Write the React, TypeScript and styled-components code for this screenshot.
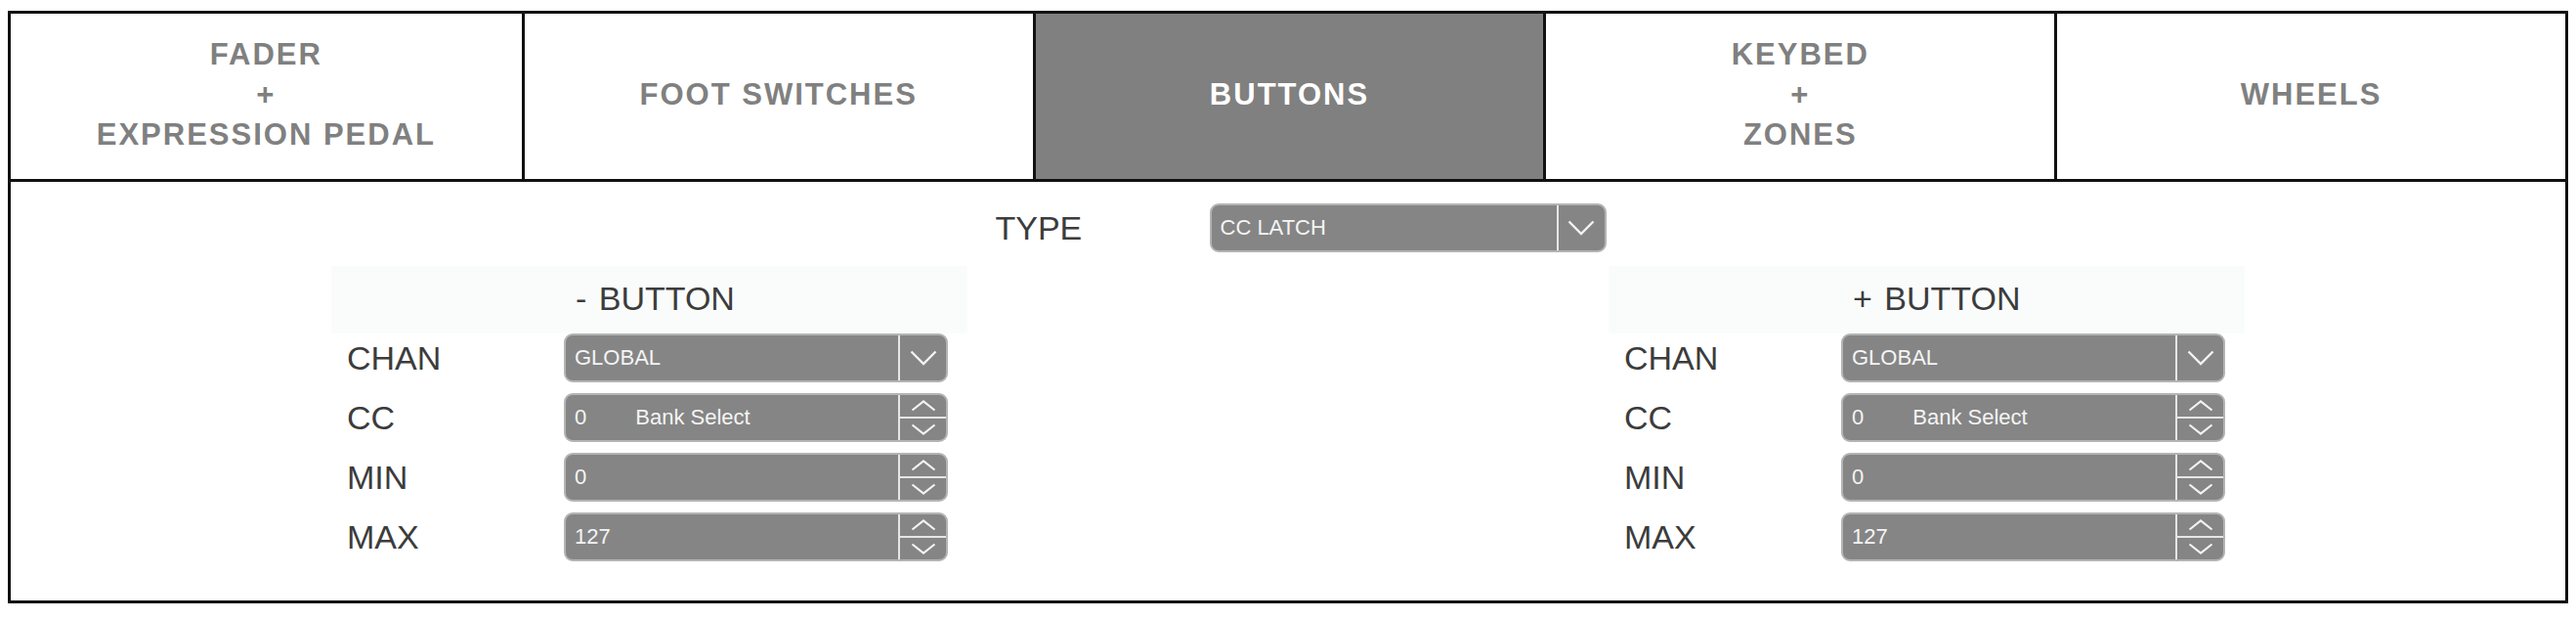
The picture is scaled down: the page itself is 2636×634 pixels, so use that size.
import React from "react";
import styled, { createGlobalStyle } from "styled-components";

const GlobalStyle = createGlobalStyle`
  html, body {
    margin: 0;
    padding: 0;
    background: #ffffff;
  }
  body {
    font-family: "Liberation Sans", Arial, sans-serif;
  }
`;

const Frame = styled.div`
  margin: 11px 8px 16px;
  border: 3px solid #111111;
  background: #ffffff;
`;

const TabBar = styled.div`
  display: grid;
  grid-template-columns: repeat(5, 1fr);
  height: 169px;
  border-bottom: 3px solid #111111;
`;

const Tab = styled.div<{ $active?: boolean }>`
  display: flex;
  align-items: center;
  justify-content: center;
  text-align: center;
  font-family: "Liberation Sans", Arial, sans-serif;
  font-weight: 700;
  font-size: 31px;
  letter-spacing: 2px;
  line-height: 41px;
  padding-bottom: 4px;
  color: ${(p) => (p.$active ? "#ffffff" : "#808080")};
  background: ${(p) => (p.$active ? "#808080" : "#ffffff")};

  & + & {
    border-left: 3px solid #111111;
  }
`;

const Content = styled.div`
  display: flex;
  flex-direction: column;
  padding: 22px 0 40px;
`;

const TypeRow = styled.div`
  display: grid;
  grid-template-columns: 219px 406px;
  align-items: center;
  width: 651px;
  box-sizing: border-box;
  padding-left: 26px;
  margin: 0 auto;
`;

const Sections = styled.div`
  display: flex;
  justify-content: space-around;
  margin-top: 14px;
`;

const Section = styled.div`
  display: flex;
  flex-direction: column;
  width: 651px;
`;

const SectionHeader = styled.div`
  display: grid;
  grid-template-columns: 238px 1fr;
  align-items: center;
  height: 69px;
  padding-bottom: 2px;
  box-sizing: border-box;
  background: #fafcfc;
  font-size: 34px;
  color: #3c3c3c;
`;

const HeaderText = styled.span`
  grid-column: 2;
  padding-left: 12px;
  word-spacing: 3px;
`;

const Rows = styled.div`
  display: grid;
  grid-template-columns: 222px 393px;
  grid-auto-rows: 50px;
  row-gap: 11px;
  padding-left: 16px;
`;

const Label = styled.div`
  display: flex;
  align-items: center;
  font-size: 34px;
  color: #3c3c3c;
`;

const Field = styled.div`
  display: flex;
  height: 50px;
  box-sizing: border-box;
  border: 2px solid #b4b4b4;
  border-radius: 9px;
  background: #858585;
  overflow: hidden;
`;

const FieldText = styled.div`
  flex: 1;
  display: flex;
  align-items: center;
  padding-left: 9px;
  font-size: 22px;
  color: #f4f4f4;
`;

const Gap = styled.span`
  display: inline-block;
  width: 50px;
`;

const Arrow = styled.div`
  width: 47px;
  display: flex;
  align-items: center;
  justify-content: center;
  border-left: 2px solid #e6e6e6;
`;

const Spinner = styled.div`
  width: 47px;
  display: flex;
  flex-direction: column;
  border-left: 2px solid #e6e6e6;
`;

const SpinHalf = styled.div`
  flex: 1;
  display: flex;
  align-items: center;
  justify-content: center;

  & + & {
    border-top: 2px solid #e6e6e6;
  }
`;

const ChevronDown = () => (
  <svg width="28" height="16" viewBox="0 0 28 16">
    <polyline points="1.5,1.5 14,14 26.5,1.5" fill="none" stroke="#f2f2f2" strokeWidth="2.4" />
  </svg>
);

const SmallChevron = ({ up }: { up?: boolean }) => (
  <svg width="26" height="12" viewBox="0 0 26 12">
    <polyline
      points={up ? "1.5,10.5 13,1.5 24.5,10.5" : "1.5,1.5 13,10.5 24.5,1.5"}
      fill="none"
      stroke="#f2f2f2"
      strokeWidth="2.2"
    />
  </svg>
);

const Select = ({ value }: { value: string }) => (
  <Field>
    <FieldText>{value}</FieldText>
    <Arrow>
      <ChevronDown />
    </Arrow>
  </Field>
);

const NumberBox = ({ children }: { children: React.ReactNode }) => (
  <Field>
    <FieldText>{children}</FieldText>
    <Spinner>
      <SpinHalf>
        <SmallChevron up />
      </SpinHalf>
      <SpinHalf>
        <SmallChevron />
      </SpinHalf>
    </Spinner>
  </Field>
);

const ButtonSection = ({ title }: { title: string }) => (
  <Section>
    <SectionHeader>
      <HeaderText>{title}</HeaderText>
    </SectionHeader>
    <Rows>
      <Label>CHAN</Label>
      <Select value="GLOBAL" />
      <Label>CC</Label>
      <NumberBox>
        0<Gap />Bank Select
      </NumberBox>
      <Label>MIN</Label>
      <NumberBox>0</NumberBox>
      <Label>MAX</Label>
      <NumberBox>127</NumberBox>
    </Rows>
  </Section>
);

const tabs = [
  { lines: ["FADER", "+", "EXPRESSION PEDAL"] },
  { lines: ["FOOT SWITCHES"] },
  { lines: ["BUTTONS"], active: true },
  { lines: ["KEYBED", "+", "ZONES"] },
  { lines: ["WHEELS"] },
];

export default function App() {
  return (
    <>
      <GlobalStyle />
      <Frame>
        <TabBar>
          {tabs.map((tab) => (
            <Tab key={tab.lines[0]} $active={tab.active}>
              <div>
                {tab.lines.map((line) => (
                  <div key={line}>{line}</div>
                ))}
              </div>
            </Tab>
          ))}
        </TabBar>
        <Content>
          <TypeRow>
            <Label>TYPE</Label>
            <Select value="CC LATCH" />
          </TypeRow>
          <Sections>
            <ButtonSection title="- BUTTON" />
            <ButtonSection title="+ BUTTON" />
          </Sections>
        </Content>
      </Frame>
    </>
  );
}
